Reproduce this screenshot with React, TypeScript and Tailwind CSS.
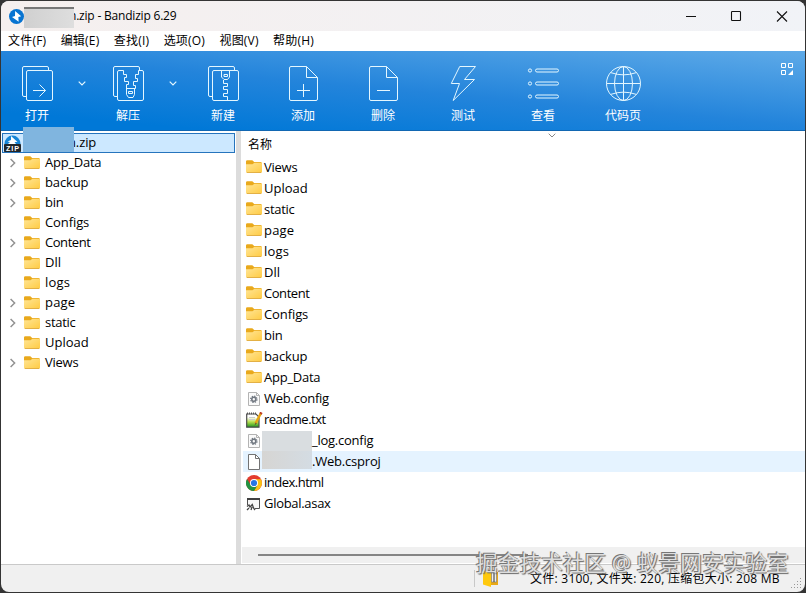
import type { ReactNode } from "react";

const ui = "font-['Open_Sans','Noto_Sans_CJK_SC',sans-serif]";

function Folder() {
  return (
    <svg width="16" height="13" viewBox="0 0 16 13" className="mb-[2px] shrink-0">
      <defs>
        <linearGradient id="fold" x1="0" y1="0" x2="1" y2="1">
          <stop offset="0" stopColor="#ffe596" />
          <stop offset="1" stopColor="#ffcb43" />
        </linearGradient>
      </defs>
      <path d="M0 1.6Q0 .2 1.4.2H6.3L8.2 2H14.6Q16 2 16 3.5V7H0Z" fill="#e9a91c" />
      <path d="M0 4.2H6.5L8.4 2.8H15Q16 2.8 16 3.8V11.4Q16 12.8 14.8 12.8H1.2Q0 12.8 0 11.4Z" fill="url(#fold)" />
      <path d="M.8 12.5H15.2" stroke="#dca536" strokeWidth=".8" />
    </svg>
  );
}

function Gear() {
  return (
    <svg width="16" height="16" viewBox="0 0 16 16" className="shrink-0">
      <path d="M2.5 1.5H10.5L13.5 4.5V14.5H2.5Z" fill="#fafafa" stroke="#b3b3b3" />
      <path d="M10.5 1.5V4.5H13.5" fill="none" stroke="#b3b3b3" />
      <circle cx="7.8" cy="8.3" r="2" fill="none" stroke="#707780" strokeWidth="1.6" />
      <circle cx="7.8" cy="8.3" r="3.2" fill="none" stroke="#707780" strokeWidth="1.1" strokeDasharray="1.4 1.11" />
    </svg>
  );
}

function Note() {
  return (
    <svg width="17" height="16" viewBox="0 0 17 16" className="shrink-0">
      <defs>
        <linearGradient id="note" x1="0" y1="0" x2="0" y2="1">
          <stop offset=".25" stopColor="#fff" />
          <stop offset=".6" stopColor="#b5df4d" />
          <stop offset="1" stopColor="#1b931c" />
        </linearGradient>
      </defs>
      <path d="M.7 2H10L13 5V15.2H.7Z" fill="url(#note)" stroke="#4c4c4c" strokeWidth="1.2" />
      <path d="M1 1.4H11" stroke="#555" strokeWidth="1.8" strokeDasharray="1 1" />
      <path d="M3 5.5H9M3 7.5H9" stroke="#ccc" />
      <path d="M14.7 1.5L9.5 11.5" stroke="#e8a511" strokeWidth="2.5" />
      <path d="M15.4.3L14.5 2" stroke="#bd3b22" strokeWidth="2.7" />
      <path d="M9.7 10.5L8.6 13.5L10.8 11.2" fill="#4e4434" />
    </svg>
  );
}

function Blank() {
  return (
    <svg width="16" height="18" viewBox="0 0 16 18" className="shrink-0">
      <path d="M2.5 1.5H9.5L13.5 5.5V16.5H2.5Z" fill="#fff" stroke="#737373" />
      <path d="M9.5 1.5V5.5H13.5" fill="none" stroke="#737373" />
    </svg>
  );
}

function Chrome() {
  return (
    <svg width="16" height="16" viewBox="0 0 16 16" className="shrink-0">
      <circle cx="8" cy="8" r="8" fill="#e33b2e" />
      <path d="M8 4.2H15A8 8 0 0 1 8 16L11.4 9.9Z" fill="#fbc116" />
      <path d="M1.1 3.9L4.7 9.9L8 12L11 11L8 16A8 8 0 0 1 1.1 3.9Z" fill="#229342" />
      <circle cx="8" cy="8" r="4" fill="#fff" />
      <circle cx="8" cy="8" r="3.1" fill="#2675e5" />
    </svg>
  );
}

function Asax() {
  return (
    <svg width="16" height="16" viewBox="0 0 16 16" className="shrink-0">
      <path d="M1.5 9V2.5H13.5V12.5H9" fill="#f7f7f7" stroke="#505050" />
      <path d="M1 3H14" stroke="#414141" strokeWidth="2" />
      <path d="M1 10.5L3 9L4 11L6.3 8.5L7.5 12L9 14M3 12L1 14M6 11L5 14" fill="none" stroke="#454545" strokeWidth="1.3" />
    </svg>
  );
}

function Bolt() {
  return (
    <svg width="15" height="15" viewBox="0 0 16 16" className="shrink-0">
      <circle cx="8" cy="8" r="8" fill="#0874d1" />
      <path d="M6.5 2.2L13 7.6L10 8.6L10.3 13.6L3.2 8.4L6.4 7.4Z" fill="#fff" />
    </svg>
  );
}

function ZipIcon() {
  return (
    <svg width="17" height="17" viewBox="0 0 17 17" className="shrink-0">
      <path d="M.5 9A8 8.5 0 0 1 16.5 9Z" fill="#1685d6" />
      <path d="M7 1L13.5 7H10.5L12 9H4L6 7L3.5 6.5L7 5Z" fill="#fff" />
      <rect y="9" width="17" height="8" rx=".7" fill="#20262b" />
      <text x="8.5" y="15.7" textAnchor="middle" fill="#fff" fontSize="7.2" fontWeight="700" fontFamily="Liberation Sans" textLength="13">ZIP</text>
    </svg>
  );
}

const back = "M4.5 30.5H2Q.5 30.5.5 29V2Q.5.5 2 .5H25Q26.5.5 26.5 2V4.5";
const front = "M6 4.5H29Q30.5 4.5 30.5 6V33Q30.5 34.5 29 34.5H6Q4.5 34.5 4.5 33V6Q4.5 4.5 6 4.5Z";
const page = "M2 .5H17.5L28.5 11.5V33Q28.5 34.5 27 34.5H2Q.5 34.5.5 33V2Q.5.5 2 .5Z";

type Tool = { label: string; box: string; arrow?: boolean; art: ReactNode };

const tools: Tool[] = [
  { label: "打开", box: "w-[30px] ml-[21px]", arrow: true, art: <><path d={back} /><path d={front} /><path d="M11 24.5H23.5M17.5 18.5L23.5 24.5L17.5 30.5" /></> },
  { label: "解压", box: "w-[30px] ml-[25px]", arrow: true, art: <><path d={back} /><path d="M4.5 6V33Q4.5 34.5 6 34.5H29Q30.5 34.5 30.5 33V6Q30.5 4.5 29 4.5H25.5V8.5H22.5V12.5H24.5V15.5H20.5V19.5H22.5V22.5H13.5V18.5H15.5V15.5H11.5V11.5H13.5V8.5H10.5V4.5H6Q4.5 4.5 4.5 6ZM13.5 22V28.5L15.5 31.5H20L21.5 28.5V22M15.5 25.5H19.5V27.5H15.5Z" /></> },
  { label: "新建", box: "w-[30px] ml-[29px]", art: <><path d={back} /><path d={front} /><path d="M13.5 5V11L16 13.5H19.5L21.5 11V5M16 8.5H19.5V10.5H16ZM15.5 14V17.5H19.5V20.5H15.5V23.5H19.5V27.5H15.5V30.5H19.5V34" /></> },
  { label: "添加", box: "w-[28px] ml-[51px]", art: <><path d={page} /><path d="M17.5.5V11.5H28.5M8 24.5H21M14.5 18V31" /></> },
  { label: "删除", box: "w-[28px] ml-[52px]", art: <><path d={page} /><path d="M17.5.5V11.5H28.5M8 24.5H21" /></> },
  { label: "测试", box: "w-[28px] ml-[52px]", art: <path d="M10.7.5H26.5L15.5 13.5H25.5L4.2 34.5L10.5 17.5H2.3Z" /> },
  { label: "查看", box: "w-[30px] ml-[51px]", art: <>{[4.5, 17.5, 30.5].map((y) => <g key={y}><circle cx="2" cy={y} r="1.6" /><rect x="7.5" y={y - 1.5} width="23" height="3" rx="1.5" /></g>)}</> },
  { label: "代码页", box: "w-[34px] ml-[48px]", art: <><circle cx="17.5" cy="17.5" r="17" /><ellipse cx="17.5" cy="17.5" rx="9" ry="17" /><path d="M17.5.5V34.5M.5 17.5H34.5M5 6.7Q17.5 11 30 6.7M5 28.3Q17.5 24 30 28.3" /></> },
];

const tree: [string, boolean][] = [
  ["App_Data", true], ["backup", true], ["bin", true], ["Configs", false], ["Content", true], ["Dll", false],
  ["logs", false], ["page", true], ["static", true], ["Upload", false], ["Views", true],
];
const folders = ["Views", "Upload", "static", "page", "logs", "Dll", "Content", "Configs", "bin", "backup", "App_Data"];
const menus = ["文件(F)", "编辑(E)", "查找(I)", "选项(O)", "视图(V)", "帮助(H)"];

const tracking: Record<string, string> = {
  App_Data: "tracking-[-0.25px]",
  backup: "tracking-[-0.15px]",
  bin: "tracking-[-0.3px]",
  Configs: "tracking-[-0.1px]",
  Content: "tracking-[-0.45px]",
  logs: "tracking-[0.2px]",
  page: "tracking-[0.2px]",
  static: "tracking-[-0.3px]",
  Views: "tracking-[-0.25px]",
  "Web.config": "tracking-[-0.25px]",
  "readme.txt": "tracking-[-0.5px]",
  "_log.config": "tracking-[-0.25px]",
  ".Web.csproj": "tracking-[-0.2px]",
  "index.html": "tracking-[-0.5px]",
  "Global.asax": "tracking-[-0.3px]",
};

function Name({ children }: { children: string }) {
  return <span className={tracking[children] ?? "tracking-normal"}>{children}</span>;
}

function FileRow({ icon, name, mask, active }: { icon: ReactNode; name: string; mask?: ReactNode; active?: boolean }) {
  return (
    <div className={`flex h-[21px] items-center pl-[3px] text-[13px] leading-[21px] whitespace-nowrap ${active ? "bg-[#e5f3ff]" : ""}`}>
      <span className="flex w-[18px] shrink-0 items-center">{icon}</span>
      {mask}
      <Name>{name}</Name>
    </div>
  );
}

export default function App() {
  return (
    <div className={`h-[593px] w-[806px] overflow-hidden bg-[#343434] p-px text-black ${ui}`}>
      <div className="relative flex h-full flex-col overflow-hidden rounded-[8px] bg-[#f0f0f0]">
        <header className="flex h-[30px] shrink-0 items-center bg-gradient-to-r from-[#f5efee] to-[#f1f3f7] pl-2">
          <Bolt />
          <span className="relative z-10 mt-[3px] h-[21px] w-[50px] border-t-2 border-[#777] bg-gradient-to-r from-[#d0d0d0] to-[#dedede]" />
          <span className="ml-[-5px] text-[12px] tracking-[-0.2px] whitespace-nowrap">n.zip - Bandizip 6.29</span>
          <svg width="104" height="12" viewBox="0 0 104 12" className="mr-[16px] ml-auto" fill="none" stroke="#111" strokeWidth="1.1">
            <path d="M1 6.5H11M92 1.5L102 11.5M102 1.5L92 11.5" />
            <rect x="46.5" y="1.5" width="9" height="9" rx=".7" />
          </svg>
        </header>
        <nav className="flex h-[20px] shrink-0 items-center gap-[14.4px] bg-white pl-[7px] text-[12px] tracking-[0.2px] whitespace-nowrap">
          {menus.map((m) => <span key={m}>{m}</span>)}
        </nav>
        <section className="flex h-[80px] shrink-0 items-start border-b border-[#1267b2] bg-[linear-gradient(185deg,#5eaae8_0%,#2384db_50%,#0078d7_88%)]">
          {tools.map((t) => (
            <div key={t.label} className="flex shrink-0">
              <div className={`flex flex-col items-center pt-[15px] text-[12px] text-white ${t.box}`}>
                <svg height="36" className="w-full overflow-visible" fill="none" stroke="#e4f7ff" strokeWidth="1">{t.art}</svg>
                <span className="mt-[5px] leading-[18px] whitespace-nowrap">{t.label}</span>
              </div>
              {t.arrow && <svg width="8" height="5" viewBox="0 0 8 5" className="mt-[30px] mr-[2px] ml-[26px]" fill="none" stroke="#e4f7ff" strokeWidth="1.2"><path d="M.7.7L4 4L7.3.7" /></svg>}
            </div>
          ))}
          <svg width="13" height="13" viewBox="0 0 13 13" className="mt-[12px] mr-[11px] ml-auto" fill="none" stroke="white"><path d="M.5.5H4.5V4.5H.5ZM7.5.5H11.5V4.5H7.5ZM.5 7.5H4.5V11.5H.5Z" /><path d="M12 7V12H7Z" fill="white" stroke="none" /></svg>
        </section>
        <main className="flex h-[433px] shrink-0 bg-white">
          <aside className="w-[235px] shrink-0 pt-[2px]">
            <div className="ml-px flex h-[20px] w-[233px] items-center border border-[#2674bd] bg-[#cce8ff] pl-px text-[13px]">
              <ZipIcon />
              <span className="relative top-[-4px] z-10 ml-[2px] h-[25px] w-[51px] shrink-0 bg-[#80b5df]" />
              <span className="ml-[-6px] tracking-[-0.1px]">n.zip</span>
            </div>
            {tree.map(([name, expand]) => (
              <div key={name} className="flex h-[20px] items-center pl-[8px] text-[13px]">
                <span className="w-[15px]">{expand && <svg width="7" height="10" viewBox="0 0 7 10" fill="none" stroke="#929292" strokeWidth="1.5"><path d="M1.6 1L5.6 5L1.6 9" /></svg>}</span>
                <Folder />
                <span className="ml-[5px]"><Name>{name}</Name></span>
              </div>
            ))}
          </aside>
          <div className="w-[5px] shrink-0 bg-[#dcdcdc]" />
          <section className="flex min-w-0 flex-1 flex-col">
            <div className="flex h-[26px] items-center pl-[7px] text-[12px]">
              <span className="mt-[2px]">名称</span>
              <svg width="8" height="5" viewBox="0 0 8 5" className="mb-[17px] ml-[276px]" fill="none" stroke="#888"><path d="M.7.7L4 4L7.3.7" /></svg>
            </div>
            <div className="pl-[2px]">
              {folders.map((f) => <FileRow key={f} icon={<Folder />} name={f} />)}
              <FileRow icon={<Gear />} name="Web.config" />
              <FileRow icon={<Note />} name="readme.txt" />
              <FileRow icon={<Gear />} name="_log.config" mask={<span className="mt-[2px] ml-[-2px] h-[21px] w-[50px] bg-[#d9dde0]" />} />
              <FileRow active icon={<Blank />} name=".Web.csproj" mask={<span className="mb-[3px] ml-[-2px] h-[18px] w-[50px] bg-gradient-to-r from-[#d6d5d3] to-[#d4dce3]" />} />
              <FileRow icon={<Chrome />} name="index.html" />
              <FileRow icon={<Asax />} name="Global.asax" />
            </div>
            <div className="mt-auto mb-[1px] ml-[1px] flex h-[16px] items-center bg-[#f0f0f0] pl-[16px]"><span className="h-[2px] w-[270px] bg-[#858585]" /></div>
          </section>
        </main>
        <footer className="flex min-h-0 flex-1 items-start border-t border-[#c9c9c9] text-[12px]">
          <span className="mt-[5px] ml-[473px] h-[17px] w-px bg-[#c8c8c8]" />
          <svg width="17" height="17" viewBox="0 0 17 17" className="mt-[5px] ml-[8px]"><path d="M7 2H15V15H7Z" fill="#e8a819" /><path d="M0 1L8 1V17L0 14.5Z" fill="#ffc90e" /><path d="M8.5 1H13.5V12H8.5Z" fill="#eee" stroke="#777" strokeWidth=".6" /><path d="M11 1.5V12" stroke="#333" strokeWidth="2" strokeDasharray="1 1" /></svg>
          <span className="mt-[5px] ml-[30px] leading-[18px] tracking-[0.25px] whitespace-nowrap">文件: 3100, 文件夹: 220, 压缩包大小: 208 MB</span>
          <svg width="11" height="11" viewBox="0 0 11 11" className="mt-[13px] mr-[3px] ml-auto" fill="#999"><path d="M9 0h1v1h-1zM6 3h1v1h-1zM9 3h1v1h-1zM3 6h1v1h-1zM6 6h1v1h-1zM9 6h1v1h-1zM0 9h1v1h-1zM3 9h1v1h-1zM6 9h1v1h-1zM9 9h1v1h-1z" /></svg>
        </footer>
        <div className="absolute top-[546px] left-[475px] text-[21.7px] leading-[32px] whitespace-nowrap text-[#dedede] [text-shadow:-1px_-1px_0_#777,1px_1px_1px_#666]">掘金技术社区 @ 蚁景网安实验室</div>
      </div>
    </div>
  );
}
